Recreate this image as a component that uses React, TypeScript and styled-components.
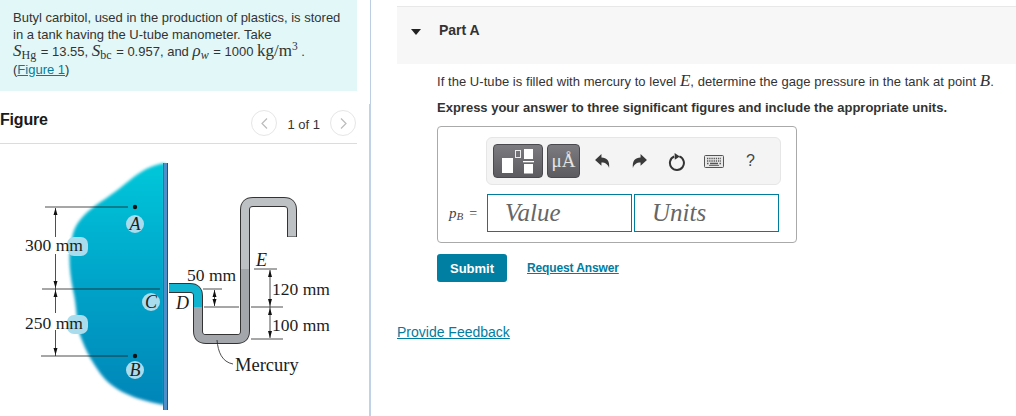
import React from 'react';
import styled, { createGlobalStyle } from 'styled-components';

const Global = createGlobalStyle`
  html, body { margin: 0; padding: 0; background: #fff; }
  body { font-family: "Liberation Sans", Arial, sans-serif; color: #333; width: 1016px; height: 416px; overflow: hidden; }
`;
const Page = styled.div`display: flex; width: 1016px; height: 416px; overflow: hidden;`;
const LeftColumn = styled.div`width: 357px; flex: none; display: flex; flex-direction: column;`;
const Problem = styled.div`
  height: 91px; box-sizing: border-box; padding: 10px 13px 0; background: #e2f7f7;
  font-size: 13px; line-height: 16.5px; color: #333;
`;
const ProblemLine = styled.div<{ $h?: number }>`white-space: nowrap; height: ${p => p.$h ?? 16.5}px; line-height: ${p => p.$h ?? 16.5}px;`;
const MathI = styled.span`font-family: "Liberation Serif", serif; font-style: italic; font-size: 17px; line-height: 0;`;
const MathR = styled.span`font-family: "Liberation Serif", serif; font-size: 17px; line-height: 0;`;
const Sub = styled.sub<{ $italic?: boolean }>`
  font-family: "Liberation Serif", serif; font-size: 12px; line-height: 0; vertical-align: -3px; margin-right: 1px;
  font-style: ${p => (p.$italic ? 'italic' : 'normal')};
`;
const Sup = styled.sup`font-family: "Liberation Serif", serif; font-size: 11.5px; line-height: 0; vertical-align: 6px;`;
const Link = styled.a`color: #007c9f; text-decoration: underline;`;
const FigureHead = styled.div`
  height: 53px; box-sizing: border-box; border-bottom: 1px solid #dcdcdc;
  display: flex; align-items: flex-start; justify-content: space-between; padding-top: 20px;
`;
const FigureTitle = styled.div`font-size: 16px; font-weight: 700; color: #1a1a1a; line-height: 18px; letter-spacing: -0.2px;`;
const Pager = styled.div`display: flex; align-items: center; gap: 10px; margin-top: -1px; padding-right: 1px;`;
const PagerButton = styled.div`
  width: 26px; height: 26px; box-sizing: border-box; border: 1px solid #e6e6e6; border-radius: 50%;
  display: flex; align-items: center; justify-content: center;
`;
const PagerText = styled.div`font-size: 13px; color: #333; padding-top: 2px;`;
const FigureArt = styled.svg`display: block; flex: none;`;
const Divider = styled.div`
  width: 2px; flex: none; margin-left: 12px;
  background:
    linear-gradient(#c0d3e6, #c0d3e6) 0 104px / 2px 100% no-repeat,
    linear-gradient(#bccfe2, #bccfe2) 1px 0 / 1px 100% no-repeat;
`;
const RightPanel = styled.div`flex: 1; display: flex; flex-direction: column; padding-top: 6px; min-width: 0;`;
const PartHead = styled.div`
  margin-left: 26px; height: 58px; box-sizing: border-box; border-top: 1px solid #e8e8e8; background: #f7f7f7;
  display: flex; align-items: flex-start; padding: 15px 0 0 14px; gap: 18px;
`;
const Caret = styled.div`
  margin-top: 7px; width: 0; height: 0; border-left: 5px solid transparent; border-right: 5px solid transparent;
  border-top: 6px solid #222;
`;
const PartTitle = styled.div`font-size: 14px; font-weight: 700; color: #333; line-height: 16px;`;
const PartBody = styled.div`display: flex; flex-direction: column; padding-left: 66px;`;
const Question = styled.div`margin-top: 9px; font-size: 13px; line-height: 18px; white-space: nowrap; color: #333; letter-spacing: 0.05px;`;
const Instruction = styled.div`margin-top: 8px; font-size: 13px; font-weight: 700; line-height: 18px; white-space: nowrap; color: #333;`;
const AnswerBox = styled.div`
  margin-top: 9px; width: 360px; height: 117px; box-sizing: border-box; border: 1px solid #aaa; border-radius: 4px;
  padding: 10px 0 0 11px; display: flex; flex-direction: column;
`;
const ToolWrap = styled.div`display: flex; justify-content: flex-start; padding-left: 37px;`;
const Toolbar = styled.div`
  width: 295px; height: 48px; box-sizing: border-box; background: #f4f4f4; border: 1px solid #e6e6e6; border-radius: 6px;
  display: flex; align-items: center; padding-left: 6px;
`;
const ToolButton = styled.div<{ $w: number }>`
  width: ${p => p.$w}px; height: 34px; box-sizing: border-box; margin-right: 4px; border: 1px solid #4a4a4e; border-radius: 4px;
  background: linear-gradient(#7c7c80, #5c5c60); display: flex; align-items: center; justify-content: center;
  color: #e4e4e4; font-family: "Liberation Serif", serif; font-size: 19px;
`;
const ToolIcon = styled.div`
  width: 37px; height: 34px; display: flex; align-items: center; justify-content: center; color: #3a3a3a; flex: none;
`;
const Help = styled.span`font-size: 16px; color: #444;`;
const InputRow = styled.div`display: flex; align-items: center; margin-top: 9px;`;
const InputLabel = styled.div`
  width: 38px; flex: none; white-space: nowrap; font-size: 14px; color: #444; font-family: "Liberation Serif", serif; padding-top: 1px;
`;
const LabelItalic = styled.span`font-style: italic; font-size: 15px;`;
const LabelSub = styled.sub`font-style: italic; font-size: 11px; line-height: 0; vertical-align: -2px; margin-right: 6px;`;
const Field = styled.div<{ $w: number }>`
  width: ${p => p.$w}px; height: 38px; box-sizing: border-box; margin-right: 2px; border: 1px solid #007c9f;
  display: flex; align-items: center; padding-left: 17px;
  font-family: "Liberation Serif", serif; font-style: italic; font-size: 25px; color: #666;
`;
const Actions = styled.div`display: flex; align-items: center; margin-top: 11px; gap: 20px;`;
const Submit = styled.div`
  width: 70px; height: 28px; background: #007fa3; border-radius: 3px; color: #fff; font-size: 13px; font-weight: 700;
  display: flex; align-items: center; justify-content: center;
`;
const Request = styled.a`font-size: 12px; font-weight: 700; color: #007c9f; text-decoration: underline; letter-spacing: -0.13px;`;
const Feedback = styled.a`
  margin: 42px 0 0 26px; font-size: 14px; line-height: 16px; color: #007c9f; text-decoration: underline;
`;

const Label: React.FC<{ x: number; y: number; t: string }> = ({ x, y, t }) => (
  <g>
    <circle cx={x} cy={y} r="9" fill="#a9dcec" />
    <text x={x} y={y + 5.5} textAnchor="middle" fontFamily="Liberation Serif" fontStyle="italic" fontSize="18" fill="#1f1f1f">{t}</text>
  </g>
);
const Dim: React.FC<{ x: number; y: number; t: string }> = ({ x, y, t }) => (
  <g>
    <rect x="67" y={y - 14} width="21" height="19" rx="7" fill="#a9dcec" />
    <text x={x} y={y} fontFamily="Liberation Serif" fontSize="17.5" fill="#1c1c1c">{t}</text>
  </g>
);
const Arrow: React.FC<{ x: number; y: number; up?: boolean }> = ({ x, y, up }) => (
  <polygon points={up ? `${x},${y} ${x - 2},${y + 7} ${x + 2},${y + 7}` : `${x},${y} ${x - 2},${y - 7} ${x + 2},${y - 7}`} fill="#111" />
);

const Drawing = () => (
  <FigureArt width="357" height="272" viewBox="0 144 357 272">
    <defs>
      <linearGradient id="tank" x1="0" y1="0" x2="0" y2="1">
        <stop offset="0" stopColor="#00c7da" />
        <stop offset="0.5" stopColor="#00a3c8" />
        <stop offset="1" stopColor="#0085b8" />
      </linearGradient>
      <filter id="soft" x="-5%" y="-5%" width="110%" height="110%"><feGaussianBlur stdDeviation="1.6" /></filter>
    </defs>
    <path d="M165 163 C150 165 140 172 130 180 C118 190 108 197 96 205 C84 214 74 224 72 238 C68 252 69 270 73 290 C77 306 76 322 80 335 C86 352 94 366 104 378 C116 392 140 401 165 405 Z" fill="url(#tank)" filter="url(#soft)" />
    <rect x="163" y="163" width="5" height="247" fill="#4f8fc9" />
    <rect x="163" y="163" width="1" height="247" fill="#3a6a94" />
    <rect x="167" y="163" width="1" height="247" fill="#2c4f70" />

    <g stroke="#222" strokeWidth="0.8" fill="none">
      <path d="M45 207 H128" /><path d="M42 289 H160" /><path d="M41 356 H128" />
      <path d="M55.5 208 V356" />
    </g>
    <Arrow x={55.5} y={208} up /><Arrow x={55.5} y={288} /><Arrow x={55.5} y={290} up /><Arrow x={55.5} y={355} />
    <circle cx="135" cy="207" r="2.2" fill="#111" /><circle cx="135" cy="356" r="2.2" fill="#111" />
    <Label x={135} y={224} t="A" /><Label x={151} y={302} t="C" /><Label x={135} y={370} t="B" />
    <rect x="25" y="237" width="44" height="17" fill="#fff" />
    <rect x="25" y="313" width="48" height="17" fill="#fff" />
    <Dim x={25} y={251} t="300 mm" /><Dim x={25} y={329} t="250 mm" />

    <path d="M169 288 H190 Q198 288 198 296 V331 Q198 339 206 339 H237 Q245 339 245 331 V210 Q245 202 253 202 H284 Q292 202 292 210 V237" fill="none" stroke="#333" strokeWidth="10" />
    <path d="M245 269 V210 Q245 202 253 202 H284 Q292 202 292 210 V236.5" fill="none" stroke="#bdc1c4" strokeWidth="8" />
    <path d="M198 307 V331 Q198 339 206 339 H237 Q245 339 245 331 V269" fill="none" stroke="#a3a7ab" strokeWidth="8" />
    <path d="M169 288 H190 Q198 288 198 296 V307" fill="none" stroke="#10b3d0" strokeWidth="8" />

    <g stroke="#222" strokeWidth="0.8" fill="none">
      <path d="M204 307 H239" /><path d="M251 307 H283" /><path d="M203 289 H222" /><path d="M254 269 H277" />
      <path d="M251 339 H283" /><path d="M214.5 290 V306" /><path d="M270 270 V338" />
      <path d="M217 340 C218 352 222 362 233 364" />
    </g>
    <Arrow x={214.5} y={290} up /><Arrow x={214.5} y={306} />
    <Arrow x={270} y={270} up /><Arrow x={270} y={306} /><Arrow x={270} y={308} up /><Arrow x={270} y={338} />
    <text x="187" y="281" fontFamily="Liberation Serif" fontSize="17.5" fill="#1c1c1c">50 mm</text>
    <text x="272" y="295" fontFamily="Liberation Serif" fontSize="17.5" fill="#1c1c1c">120 mm</text>
    <text x="272" y="331" fontFamily="Liberation Serif" fontSize="17.5" fill="#1c1c1c">100 mm</text>
    <text x="235" y="371" fontFamily="Liberation Serif" fontSize="18.5" fill="#1c1c1c">Mercury</text>
    <text x="256" y="266" fontFamily="Liberation Serif" fontStyle="italic" fontSize="18" fill="#1c1c1c">E</text>
    <text x="176" y="309" fontFamily="Liberation Serif" fontStyle="italic" fontSize="18" fill="#1c1c1c">D</text>
  </FigureArt>
);

const UndoIcon: React.FC<{ flip?: boolean }> = ({ flip }) => (
  <svg width="17" height="17" viewBox="0 0 16 16" style={flip ? { transform: 'scaleX(-1)' } : undefined}>
    <path d="M1 6.5 L7 1 V4.3 C12 4.3 15 7.5 14.2 14 C13 10.8 11 9 7 9 V12 Z" fill="#3a3a3a" />
  </svg>
);
const ResetIcon = () => (
  <svg width="18" height="19" viewBox="0 0 18 19" fill="none">
    <path d="M11.4 4.4 A7 7 0 1 1 6.2 4.5" stroke="#333" strokeWidth="2" />
    <path d="M6.6 1 L11.8 4.4 L6.8 7.8 Z" fill="#333" />
  </svg>
);
const KeyboardIcon = () => (
  <svg width="20" height="13" viewBox="0 0 20 13">
    <rect x="0.5" y="0.5" width="19" height="12" rx="1" fill="#e8e8e8" stroke="#555" />
    <path d="M3 3.5 H17 M3 6 H17" stroke="#555" strokeWidth="1.3" strokeDasharray="1.3 0.9" />
    <path d="M3 8.5 H4.5 M6 8.5 H14 M15.5 8.5 H17" stroke="#555" strokeWidth="1.3" />
    <path d="M5 10.4 H15" stroke="#555" strokeWidth="0.9" />
  </svg>
);
const TemplateIcon = () => (
  <svg width="33" height="25" viewBox="0 0 33 25">
    <rect x="0" y="9" width="11" height="15" fill="#fff" />
    <rect x="13.5" y="1.5" width="5" height="7" fill="none" stroke="#ececec" />
    <rect x="22" y="0" width="9" height="10" fill="#fff" />
    <rect x="21" y="12" width="11" height="1.3" fill="#fff" />
    <rect x="22" y="15" width="9" height="9.5" fill="#fff" />
  </svg>
);

export default function App() {
  return (
    <Page>
      <Global />
      <LeftColumn>
        <Problem>
          <ProblemLine>Butyl carbitol, used in the production of plastics, is stored</ProblemLine>
          <ProblemLine>in a tank having the U-tube manometer. Take</ProblemLine>
          <ProblemLine $h={18.5}>
            <MathI>S</MathI><Sub>Hg</Sub> = 13.55, <MathI>S</MathI><Sub>bc</Sub> = 0.957, and <MathI>ρ</MathI><Sub $italic>w</Sub> = 1000 <MathR>kg/m</MathR><Sup>3</Sup> .
          </ProblemLine>
          <ProblemLine>(<Link>Figure 1</Link>)</ProblemLine>
        </Problem>
        <FigureHead>
          <FigureTitle>Figure</FigureTitle>
          <Pager>
            <PagerButton>
              <svg width="9" height="13" viewBox="0 0 9 13" fill="none"><path d="M7 1.5 L2 6.5 L7 11.5" stroke="#bbb" strokeWidth="1.2" /></svg>
            </PagerButton>
            <PagerText>1 of 1</PagerText>
            <PagerButton>
              <svg width="9" height="13" viewBox="0 0 9 13" fill="none"><path d="M2 1.5 L7 6.5 L2 11.5" stroke="#bbb" strokeWidth="1.2" /></svg>
            </PagerButton>
          </Pager>
        </FigureHead>
        <Drawing />
      </LeftColumn>
      <Divider />
      <RightPanel>
        <PartHead>
          <Caret />
          <PartTitle>Part A</PartTitle>
        </PartHead>
        <PartBody>
          <Question>
            If the U-tube is filled with mercury to level <MathI>E</MathI>, determine the gage pressure in the tank at point <MathI>B</MathI>.
          </Question>
          <Instruction>Express your answer to three significant figures and include the appropriate units.</Instruction>
          <AnswerBox>
            <ToolWrap>
              <Toolbar>
                <ToolButton $w={50}><TemplateIcon /></ToolButton>
                <ToolButton $w={33}>μÅ</ToolButton>
                <ToolIcon><UndoIcon /></ToolIcon>
                <ToolIcon><UndoIcon flip /></ToolIcon>
                <ToolIcon><ResetIcon /></ToolIcon>
                <ToolIcon><KeyboardIcon /></ToolIcon>
                <ToolIcon><Help>?</Help></ToolIcon>
              </Toolbar>
            </ToolWrap>
            <InputRow>
              <InputLabel><LabelItalic>p</LabelItalic><LabelSub>B</LabelSub>=</InputLabel>
              <Field $w={145}>Value</Field>
              <Field $w={145}>Units</Field>
            </InputRow>
          </AnswerBox>
          <Actions>
            <Submit>Submit</Submit>
            <Request>Request Answer</Request>
          </Actions>
        </PartBody>
        <Feedback>Provide Feedback</Feedback>
      </RightPanel>
    </Page>
  );
}
